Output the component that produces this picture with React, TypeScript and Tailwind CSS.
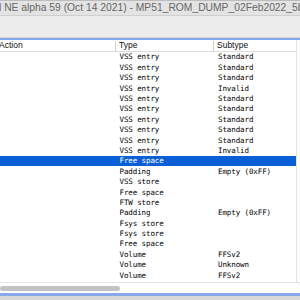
import React from "react";

const rows: [string, string][] = [
  ["VSS entry", "Standard"],
  ["VSS entry", "Standard"],
  ["VSS entry", "Standard"],
  ["VSS entry", "Invalid"],
  ["VSS entry", "Standard"],
  ["VSS entry", "Standard"],
  ["VSS entry", "Standard"],
  ["VSS entry", "Standard"],
  ["VSS entry", "Standard"],
  ["VSS entry", "Invalid"],
  ["Free space", ""],
  ["Padding", "Empty (0xFF)"],
  ["VSS store", ""],
  ["Free space", ""],
  ["FTW store", ""],
  ["Padding", "Empty (0xFF)"],
  ["Fsys store", ""],
  ["Fsys store", ""],
  ["Free space", ""],
  ["Volume", "FFSv2"],
  ["Volume", "Unknown"],
  ["Volume", "FFSv2"],
];

const mono = { fontFamily: '"DejaVu Sans Mono", monospace' };

export default function App() {
  return (
    <div
      className="w-[300px] h-[300px] overflow-hidden bg-white flex flex-col"
      style={{ fontFamily: '"Liberation Sans", Arial, sans-serif' }}
    >
      {/* title bar */}
      <div className="h-[15px] shrink-0 bg-[#e3e3e3] border-t border-[#bdbdbd] flex items-center overflow-hidden">
        <span className="whitespace-nowrap text-[10.3px] leading-none text-[#666] -ml-[1px]">
          l NE alpha 59 (Oct 14 2021) - MP51_ROM_DUMP_02Feb2022_5bc3
        </span>
      </div>
      <div className="h-px shrink-0 bg-[#cfcfcf]" />
      {/* toolbar */}
      <div className="h-[21px] shrink-0 bg-[#ececec]" />
      <div className="h-px shrink-0 bg-[#d2d2d2]" />
      <div className="h-[2px] shrink-0 bg-[#87a9ee]" />
      {/* table */}
      <div className="h-[242px] shrink-0 flex">
        <div className="w-[297px] h-full border-r border-[#e2e2e2] flex flex-col">
          {/* header */}
          <div className="h-[12px] shrink-0 flex items-center border-b border-[#dcdcdc] text-[8.5px] leading-none text-[#111]">
            <div className="w-[116px] h-full flex items-center -ml-[1px]">Action</div>
            <div className="w-[98px] h-[10px] flex items-center border-l border-[#cfcfcf] pl-[3px]">Type</div>
            <div className="w-[83px] h-[10px] flex items-center border-l border-[#cfcfcf] pl-[3px]">Subtype</div>
          </div>
          {rows.map(([t, s], i) => {
            const sel = i === 10;
            return (
              <div
                key={i}
                className={`h-[10.4px] shrink-0 flex items-center text-[7.5px] tracking-[-0.1px] leading-none ${
                  sel ? "bg-[#0b5fd6] text-white" : "text-black"
                }`}
                style={mono}
              >
                <div className="w-[116px] shrink-0" />
                <div className="w-[98px] shrink-0 pl-[3.5px] whitespace-nowrap">{t}</div>
                <div className="w-[82px] shrink-0 pl-[4px] whitespace-nowrap">{s}</div>
              </div>
            );
          })}
        </div>
        <div className="w-[3px] h-full bg-white" />
      </div>
      {/* horizontal scrollbar */}
      <div className="h-px shrink-0 bg-[#e4e4e4]" />
      <div className="h-[10px] shrink-0 bg-white pt-[3px]">
        <div className="w-[120px] h-[5px] rounded-full bg-[#c2c2c2]" />
      </div>
      <div className="h-[3px] shrink-0 bg-[#87a9ee]" />
      <div className="h-[4px] shrink-0 bg-[#d7d7d7]" />
    </div>
  );
}
